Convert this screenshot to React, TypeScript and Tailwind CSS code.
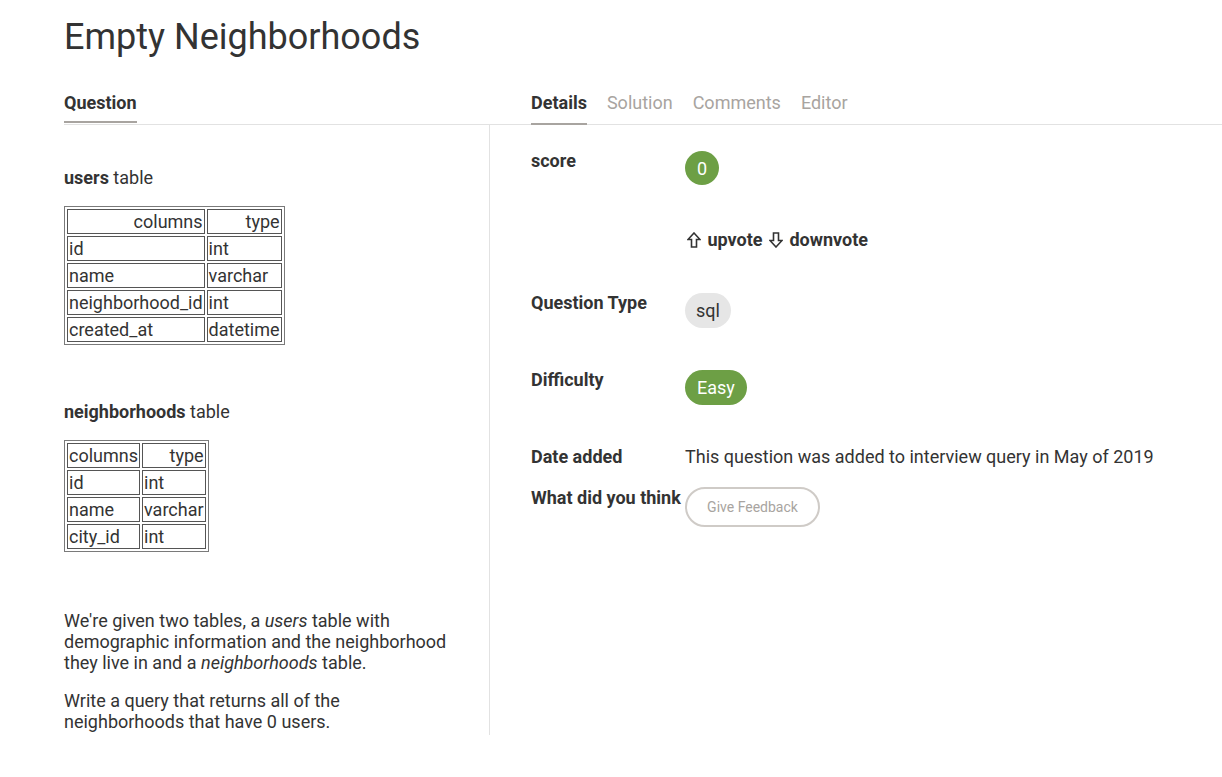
import React from "react";

type Col = { name: string; type: string };

const usersCols: Col[] = [
  { name: "id", type: "int" },
  { name: "name", type: "varchar" },
  { name: "neighborhood_id", type: "int" },
  { name: "created_at", type: "datetime" },
];

const hoodCols: Col[] = [
  { name: "id", type: "int" },
  { name: "name", type: "varchar" },
  { name: "city_id", type: "int" },
];

const SchemaTable = ({ rows }: { rows: Col[] }) => (
  <table className="border-separate border-spacing-[2px] border border-[#7a7a7a] text-[18px] leading-[21px]">
    <tbody>
      <tr>
        <td className="border border-[#555] p-[1px] text-right">columns</td>
        <td className="border border-[#555] p-[1px] text-right">type</td>
      </tr>
      {rows.map((r) => (
        <tr key={r.name}>
          <td className="border border-[#555] p-[1px]">{r.name}</td>
          <td className="border border-[#555] p-[1px]">{r.type}</td>
        </tr>
      ))}
    </tbody>
  </table>
);

const Arrow = ({ down }: { down?: boolean }) => (
  <svg
    width="14"
    height="16"
    viewBox="0 0 14 16"
    className="inline-block align-[-2px] mx-[2px]"
    fill="none"
    stroke="currentColor"
    strokeWidth="1.6"
    strokeLinejoin="miter"
  >
    {down ? (
      <path d="M7 15 L13 8.5 H9.5 V1 H4.5 V8.5 H1 Z" />
    ) : (
      <path d="M7 1 L13 7.5 H9.5 V15 H4.5 V7.5 H1 Z" />
    )}
  </svg>
);

const Row = ({
  label,
  className,
  children,
}: {
  label?: string;
  className?: string;
  children: React.ReactNode;
}) => (
  <div className={`flex items-start ${className ?? ""}`}>
    <div className="w-[154px] shrink-0 font-bold leading-[21px]">{label}</div>
    <div>{children}</div>
  </div>
);

const App = () => {
  return (
    <div
      className="min-h-screen bg-white text-[#333] text-[18px] leading-[21px]"
      style={{ fontFamily: "Roboto, 'Liberation Sans', sans-serif" }}
    >
      <div className="pl-[64px] pt-[16px]">
        <h1 className="text-[36px] leading-[42px] font-normal">
          Empty Neighborhoods
        </h1>

        <div className="flex mt-[34px]">
          {/* left: question */}
          <div className="w-[426px] shrink-0">
            <div className="h-[33px] border-b border-[#e2e2e2]">
              <span className="inline-block font-bold pb-[8px] border-b-2 border-[#a8a4a0]">
                Question
              </span>
            </div>
            <div className="border-r border-[#e2e2e2] pt-[42px] pb-[3px]">
              <p>
                <b>users</b> table
              </p>
              <div className="mt-[18px]">
                <SchemaTable rows={usersCols} />
              </div>
              <p className="mt-[56px]">
                <b>neighborhoods</b> table
              </p>
              <div className="mt-[18px]">
                <SchemaTable rows={hoodCols} />
              </div>
              <div className="w-[390px] mt-[58px]">
                <p>
                  We're given two tables, a <i>users</i> table with demographic
                  information and the neighborhood they live in and a{" "}
                  <i>neighborhoods</i> table.
                </p>
                <p className="mt-[17px]">
                  Write a query that returns all of the neighborhoods that have 0
                  users.
                </p>
              </div>
            </div>
          </div>

          {/* right: details */}
          <div className="flex-1">
            <div className="h-[33px] border-b border-[#e2e2e2] pl-[41px] flex gap-5">
              <span className="inline-block h-[33px] font-bold pb-[8px] border-b-2 border-[#a8a4a0]">
                Details
              </span>
              <span className="text-[#a8a4a0]">Solution</span>
              <span className="text-[#a8a4a0]">Comments</span>
              <span className="text-[#a8a4a0]">Editor</span>
            </div>
            <div className="pl-[41px] pt-[25px]">
              <Row label="score">
                <div className="mt-[1px] w-[34px] h-[34px] rounded-full bg-[#6d9f45] text-white flex items-center justify-center">
                  0
                </div>
              </Row>
              <Row className="mt-[44px]">
                <span className="font-bold">
                  <Arrow /> upvote <Arrow down /> downvote
                </span>
              </Row>
              <Row label="Question Type" className="mt-[42px]">
                <span className="mt-[1px] inline-flex items-center h-[35px] px-[11px] rounded-full bg-[#e6e6e6]">
                  sql
                </span>
              </Row>
              <Row label="Difficulty" className="mt-[41px]">
                <span className="mt-[1px] inline-flex items-center h-[35px] px-[12px] rounded-full bg-[#6d9f45] text-white">
                  Easy
                </span>
              </Row>
              <Row label="Date added" className="mt-[41px]">
                This question was added to interview query in May of 2019
              </Row>
              <Row label="What did you think" className="mt-[20px]">
                <button className="w-[135px] h-[40px] rounded-full border-2 border-[#cfcbc7] text-[14px] text-[#a8a4a0]">
                  Give Feedback
                </button>
              </Row>
            </div>
          </div>
        </div>
      </div>
    </div>
  );
};

export default App;
